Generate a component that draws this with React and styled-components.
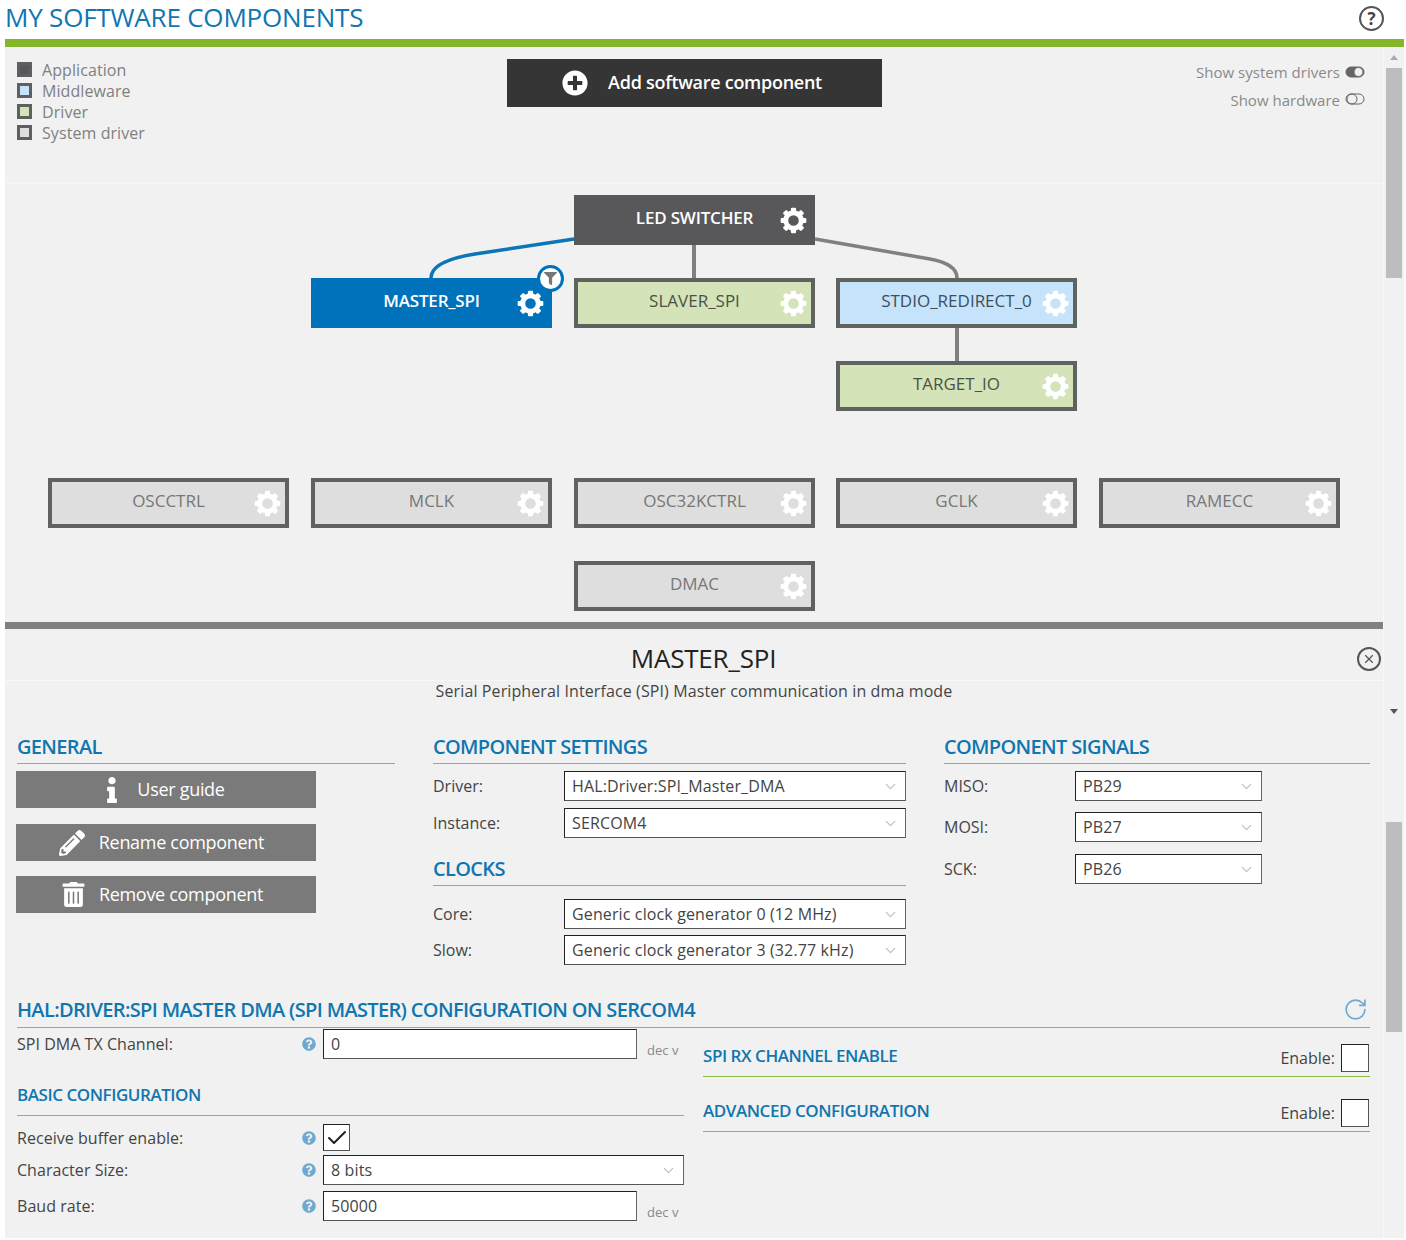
import React from 'react';
import styled, { createGlobalStyle } from 'styled-components';
import { FaFilter, FaInfo, FaPencilAlt, FaPlusCircle, FaQuestionCircle, FaTrashAlt } from 'react-icons/fa';
import { ChevronDown, RotateCw, X, Check } from 'lucide-react';

const blue = '#0f76b0';
const green = '#8dbd45';

const GlobalStyle = createGlobalStyle`
  html, body {
    margin: 0;
    padding: 0;
    background: #fff;
  }
  body {
    font-family: "Open Sans", "Liberation Sans", sans-serif;
    color: #333;
    overflow: hidden;
  }
`;

const Page = styled.div`
  width: 1406px;
  height: 1240px;
  padding-left: 5px;
  box-sizing: border-box;
  overflow: hidden;
`;

const TopBar = styled.header`
  width: 1399px;
  height: 39px;
  display: flex;
  justify-content: space-between;
  align-items: center;
  border-bottom: 8px solid #84b62c;
  box-sizing: content-box;
`;

const PageTitle = styled.h1`
  margin: 0 0 5px 0;
  font-size: 26px;
  font-weight: 400;
  letter-spacing: -0.2px;
  color: ${blue};
`;

const HelpCircle = styled.div`
  width: 25px;
  height: 25px;
  margin: 0 20px 3px 0;
  border: 2px solid #555;
  border-radius: 50%;
  box-sizing: border-box;
  display: flex;
  align-items: center;
  justify-content: center;
  font-size: 17px;
  font-weight: 700;
  color: #444;
`;

const Main = styled.div`
  display: flex;
  width: 1399px;
  height: 1191px;
  background: #f1f1f1;
`;

const Content = styled.div`
  width: 1378px;
  flex: none;
`;

const Rail = styled.aside`
  width: 21px;
  border-left: 1px solid #f8f8f8;
  box-sizing: border-box;
  display: flex;
  flex-direction: column;
  align-items: center;
  padding: 8px 1px 0 0;
`;

const Arrow = styled.i`
  width: 0;
  height: 0;
  border-left: 4px solid transparent;
  border-right: 4px solid transparent;
  ${({ $down }) => ($down ? 'border-top: 5px solid #555;' : 'border-bottom: 5px solid #aaa;')}
  margin-top: ${({ $gap }) => $gap}px;
`;

const Thumb = styled.div`
  width: 16px;
  height: 210px;
  background: #bdbdbd;
  margin-top: ${({ $gap }) => $gap}px;
`;

const Toolbar = styled.div`
  height: 137px;
  margin-bottom: -1px;
  border-bottom: 1px solid #f6f6f6;
  box-sizing: border-box;
  display: grid;
  grid-template-columns: 502px 375px 1fr;
  padding-top: 12px;
`;

const Legend = styled.ul`
  list-style: none;
  margin: 0;
  padding: 0 0 0 12px;
`;

const LegendItem = styled.li`
  display: flex;
  align-items: center;
  gap: 10px;
  height: 21px;
  font-size: 16px;
  letter-spacing: 0.08px;
  color: #808080;
`;

const Swatch = styled.span`
  width: 15px;
  height: 15px;
  box-sizing: border-box;
  border: 3px solid #5d5f60;
  background: ${({ $fill }) => $fill};
`;

const AddButton = styled.button`
  height: 48px;
  border: 0;
  padding: 0 5px 3px 0;
  background: #353535;
  color: #fff;
  font-family: inherit;
  font-size: 18px;
  font-weight: 600;
  letter-spacing: -0.28px;
  display: flex;
  align-items: center;
  justify-content: center;
  gap: 20px;

  svg {
    margin-top: 3px;
  }
`;

const Toggles = styled.div`
  display: flex;
  flex-direction: column;
  align-items: flex-end;
  gap: 6px;
  padding: 2px 18px 0 0;
`;

const ToggleRow = styled.div`
  display: flex;
  align-items: center;
  gap: 5px;
  height: 22px;
  font-size: 15px;
  letter-spacing: 0.02px;
  color: #8a8a8a;

  svg {
    margin-top: ${({ $raise }) => ($raise ? -3 : 0)}px;
  }
`;

const Canvas = styled.div`
  position: relative;
  height: 439px;
`;

const Links = styled.svg`
  position: absolute;
  left: 0;
  top: 0;
  width: 100%;
  height: 100%;
`;

const nodeThemes = {
  app: { bg: '#58585a', border: '#58585a', text: '#fff', weight: 600, spacing: -0.2 },
  selected: { bg: '#0072bc', border: '#0072bc', text: '#fff', weight: 600, spacing: -0.2 },
  driver: { bg: '#d5e3b8', border: '#5f625e', text: '#4c5147', weight: 400, spacing: 0 },
  middleware: { bg: '#c5e4fb', border: '#5f625e', text: '#3c4e5c', weight: 400, spacing: 0 },
  system: { bg: '#dedede', border: '#5f625e', text: '#777', weight: 400, spacing: 0 },
};

const Node = styled.div`
  position: absolute;
  left: ${({ $x }) => $x}px;
  top: ${({ $y }) => $y}px;
  width: 241px;
  height: 50px;
  box-sizing: border-box;
  border: 4px solid ${({ $kind }) => nodeThemes[$kind].border};
  background: ${({ $kind }) => nodeThemes[$kind].bg};
  color: ${({ $kind }) => nodeThemes[$kind].text};
  font-size: 17px;
  font-weight: ${({ $kind }) => nodeThemes[$kind].weight};
  letter-spacing: ${({ $kind }) => nodeThemes[$kind].spacing}px;
  display: flex;
  align-items: center;
  justify-content: center;
  padding-bottom: 5px;
`;

const GearIcon = styled.svg`
  position: absolute;
  right: 4px;
  top: 8px;
  width: 27px;
  height: 27px;
  color: #fff;
`;

const FilterBadge = styled.span`
  position: absolute;
  right: -16px;
  top: -17px;
  width: 27px;
  height: 27px;
  box-sizing: border-box;
  border: 3px solid #0072bc;
  border-radius: 50%;
  background: #fff;
  display: flex;
  align-items: center;
  justify-content: center;
  color: #777;
`;

const Divider = styled.div`
  height: 7px;
  background: #808080;
`;

const DetailHead = styled.div`
  position: relative;
  height: 87px;
  text-align: center;
`;

const DetailTitle = styled.div`
  padding: 12px 0 0 19px;
  height: 39px;
  font-size: 26px;
  line-height: 34px;
  letter-spacing: -0.2px;
  color: #222;
  border-bottom: 1px solid #f8f8f8;
`;

const DetailSub = styled.div`
  font-size: 16px;
  line-height: 20px;
  letter-spacing: 0.11px;
  color: #444;
`;

const CloseBtn = styled.span`
  position: absolute;
  right: 2px;
  top: 18px;
  width: 24px;
  height: 24px;
  box-sizing: border-box;
  border: 2px solid #555;
  border-radius: 50%;
  display: flex;
  align-items: center;
  justify-content: center;
  color: #555;
`;

const Body = styled.div`
  padding: 14px 0 0 12px;
  width: 1353px;
`;

const Columns = styled.div`
  display: grid;
  grid-template-columns: 378px 473px 426px;
  column-gap: 38px;
`;

const Heading = styled.h2`
  margin: ${({ $top }) => $top || 0}px 0 ${({ $bottom }) => $bottom || 0}px;
  height: ${({ $tall }) => ($tall ? 35 : 34)}px;
  box-sizing: border-box;
  border-bottom: 1px solid ${green};
  font-size: 20px;
  font-weight: 600;
  line-height: 34px;
  letter-spacing: -0.66px;
  color: ${blue};
  white-space: nowrap;
  display: flex;
  justify-content: space-between;
`;

const SubHeading = styled(Heading)`
  height: 37px;
  font-size: 17px;
  line-height: 31px;
  letter-spacing: -0.45px;
`;

const RefreshIcon = styled(RotateCw)`
  margin: 4px 2px 0 0;
  color: #6fa9cf;
`;

const GeneralButton = styled.button`
  display: flex;
  align-items: center;
  justify-content: center;
  gap: ${({ $gap }) => $gap}px;
  width: 300px;
  height: 37px;
  margin: 0 0 ${({ $after }) => $after}px -1px;
  padding: 0 ${({ $shift }) => $shift}px 2px 0;
  border: 0;
  background: #7a7a7a;
  color: #fff;
  font-family: inherit;
  font-size: 18px;
  letter-spacing: -0.3px;

  svg {
    flex: none;
    margin-top: 2px;
  }
`;

const FieldRow = styled.div`
  display: grid;
  grid-template-columns: 131px ${({ $width }) => $width || '1fr'};
  align-items: center;
  margin-bottom: ${({ $after }) => $after || 0}px;
  font-size: 16px;
  color: #444;
`;

const Box = styled.div`
  box-sizing: border-box;
  height: 30px;
  padding: 0 8px 0 7px;
  background: #fff;
  border: 1px solid #222;
  border-right-color: #666;
  border-bottom-color: #555;
  display: flex;
  align-items: center;
  justify-content: space-between;
  font-size: 16px;
  letter-spacing: 0.13px;
  color: #444;

  svg {
    flex: none;
    color: #bbb;
    margin-right: -2px;
  }
`;

const ConfigColumns = styled.div`
  display: grid;
  grid-template-columns: 667px 667px;
  column-gap: 19px;
`;

const CheckBox = styled.span`
  display: flex;
  align-items: center;
  justify-content: center;
  box-sizing: border-box;
  width: ${({ $size }) => $size}px;
  height: ${({ $size }) => $size}px;
  background: #fff;
  border: 1px solid #222;
  border-right-color: #555;
  border-bottom-color: #555;
  color: #222;
`;

const ConfigRow = styled.div`
  display: grid;
  grid-template-columns: 285px 14px ${({ $wide }) => ($wide ? '368px' : '321px 1fr')};
  align-items: center;
  margin-top: ${({ $top }) => $top || 0}px;
  font-size: 16px;
  letter-spacing: 0.04px;
  color: #444;

  ${Box}, ${CheckBox} {
    margin-left: 7px;
  }
`;

const HelpIcon = styled(FaQuestionCircle)`
  width: 14px;
  height: 14px;
  color: #6fa9cf;
`;

const Unit = styled.span`
  margin: 13px 0 0 10px;
  font-size: 13px;
  color: #888;
`;

const EnableRow = styled.div`
  height: 49px;
  margin-bottom: 6px;
  box-sizing: border-box;
  border-bottom: 1px solid ${green};
  display: flex;
  justify-content: space-between;
  align-items: flex-end;
  padding: 0 1px 4px 0;
`;

const EnableTitle = styled.span`
  font-size: 17px;
  font-weight: 600;
  letter-spacing: -0.45px;
  color: ${blue};
  margin-bottom: 5px;
`;

const EnableControl = styled.label`
  display: flex;
  align-items: center;
  gap: 6px;
  font-size: 16px;
  color: #444;
`;

const ToggleOn = () => (
  <svg width="20" height="12" viewBox="0 0 20 12">
    <rect x="1" y="1" width="18" height="10" rx="5" fill="#666" stroke="#666" />
    <circle cx="13.5" cy="6" r="4.5" fill="#f1f1f1" stroke="#666" />
  </svg>
);

const ToggleOff = () => (
  <svg width="20" height="12" viewBox="0 0 20 12" fill="none" stroke="#666">
    <rect x="1" y="1" width="18" height="10" rx="5" />
    <circle cx="7" cy="6" r="5" />
  </svg>
);

// eight teeth around a ring, the hole stays see-through
const Gear = () => (
  <GearIcon viewBox="0 0 24 24" fill="currentColor">
    <circle cx="12" cy="12" r="6.9" fill="none" stroke="currentColor" strokeWidth="4.4" />
    {[0, 45, 90, 135, 180, 225, 270, 315].map((angle) => (
      <rect key={angle} x="9.7" y="0.6" width="4.6" height="5" rx="1" transform={`rotate(${angle} 12 12)`} />
    ))}
  </GearIcon>
);

const legend = [
  ['Application', '#58585a'],
  ['Middleware', '#c5e4fb'],
  ['Driver', '#d5e3b8'],
  ['System driver', '#dedede'],
];

const nodes = [
  { name: 'LED SWITCHER', kind: 'app', x: 569, y: 12 },
  { name: 'MASTER_SPI', kind: 'selected', x: 306, y: 95, filter: true },
  { name: 'SLAVER_SPI', kind: 'driver', x: 569, y: 95 },
  { name: 'STDIO_REDIRECT_0', kind: 'middleware', x: 831, y: 95 },
  { name: 'TARGET_IO', kind: 'driver', x: 831, y: 178 },
  { name: 'OSCCTRL', kind: 'system', x: 43, y: 295 },
  { name: 'MCLK', kind: 'system', x: 306, y: 295 },
  { name: 'OSC32KCTRL', kind: 'system', x: 569, y: 295 },
  { name: 'GCLK', kind: 'system', x: 831, y: 295 },
  { name: 'RAMECC', kind: 'system', x: 1094, y: 295 },
  { name: 'DMAC', kind: 'system', x: 569, y: 378 },
];

const Select = ({ value }) => (
  <Box>
    {value}
    <ChevronDown size={17} strokeWidth={1.5} />
  </Box>
);

export default function App() {
  return (
    <>
      <GlobalStyle />
      <Page>
        <TopBar>
          <PageTitle>MY SOFTWARE COMPONENTS</PageTitle>
          <HelpCircle>?</HelpCircle>
        </TopBar>
        <Main>
          <Content>
            <Toolbar>
              <Legend>
                {legend.map(([label, fill]) => (
                  <LegendItem key={label}>
                    <Swatch $fill={fill} />
                    {label}
                  </LegendItem>
                ))}
              </Legend>
              <AddButton>
                <FaPlusCircle size={26} />
                Add software component
              </AddButton>
              <Toggles>
                <ToggleRow>Show system drivers <ToggleOn /></ToggleRow>
                <ToggleRow $raise>Show hardware <ToggleOff /></ToggleRow>
              </Toggles>
            </Toolbar>
            <Canvas>
              <Links viewBox="0 0 1378 439" fill="none">
                <path d="M569 56 L470 71 Q426 78 426 95" stroke="#0a75b8" strokeWidth="3.5" />
                <path d="M689 62 V95" stroke="#808080" strokeWidth="4" />
                <path d="M810 56 L925 76 Q952 81 952 95" stroke="#808080" strokeWidth="3.5" />
                <path d="M952 145 V178" stroke="#808080" strokeWidth="4" />
              </Links>
              {nodes.map((node) => (
                <Node key={node.name} $kind={node.kind} $x={node.x} $y={node.y}>
                  {node.name}
                  <Gear />
                  {node.filter && (
                    <FilterBadge>
                      <FaFilter size={13} />
                    </FilterBadge>
                  )}
                </Node>
              ))}
            </Canvas>
            <Divider />
            <DetailHead>
              <DetailTitle>MASTER_SPI</DetailTitle>
              <DetailSub>Serial Peripheral Interface (SPI) Master communication in dma mode</DetailSub>
              <CloseBtn>
                <X size={14} strokeWidth={2} />
              </CloseBtn>
            </DetailHead>
            <Body>
              <Columns>
                <div>
                  <Heading $bottom={7}>GENERAL</Heading>
                  <GeneralButton $gap={12} $after={16} $shift={8}>
                    <FaInfo size={26} />
                    User guide
                  </GeneralButton>
                  <GeneralButton $gap={14} $after={15} $shift={9}>
                    <FaPencilAlt size={26} />
                    Rename component
                  </GeneralButton>
                  <GeneralButton $gap={13} $after={0} $shift={8}>
                    <FaTrashAlt size={25} />
                    Remove component
                  </GeneralButton>
                </div>
                <div>
                  <Heading $bottom={7}>COMPONENT SETTINGS</Heading>
                  <FieldRow $after={7}>
                    <span>Driver:</span>
                    <Select value="HAL:Driver:SPI_Master_DMA" />
                  </FieldRow>
                  <FieldRow>
                    <span>Instance:</span>
                    <Select value="SERCOM4" />
                  </FieldRow>
                  <Heading $top={14} $bottom={13}>CLOCKS</Heading>
                  <FieldRow $after={6}>
                    <span>Core:</span>
                    <Select value="Generic clock generator 0 (12 MHz)" />
                  </FieldRow>
                  <FieldRow>
                    <span>Slow:</span>
                    <Select value="Generic clock generator 3 (32.77 kHz)" />
                  </FieldRow>
                </div>
                <div>
                  <Heading $bottom={7}>COMPONENT SIGNALS</Heading>
                  <FieldRow $width="187px" $after={11}>
                    <span>MISO:</span>
                    <Select value="PB29" />
                  </FieldRow>
                  <FieldRow $width="187px" $after={12}>
                    <span>MOSI:</span>
                    <Select value="PB27" />
                  </FieldRow>
                  <FieldRow $width="187px">
                    <span>SCK:</span>
                    <Select value="PB26" />
                  </FieldRow>
                </div>
              </Columns>
              <Heading $top={28} $tall>
                HAL:DRIVER:SPI MASTER DMA (SPI MASTER) CONFIGURATION ON SERCOM4
                <RefreshIcon size={25} strokeWidth={1.6} />
              </Heading>
              <ConfigColumns>
                <div>
                  <ConfigRow>
                    <span>SPI DMA TX Channel:</span>
                    <HelpIcon />
                    <Box>0</Box>
                    <Unit>dec v</Unit>
                  </ConfigRow>
                  <SubHeading $top={20} $bottom={8}>BASIC CONFIGURATION</SubHeading>
                  <ConfigRow>
                    <span>Receive buffer enable:</span>
                    <HelpIcon />
                    <CheckBox $size={27}>
                      <Check size={24} strokeWidth={2} />
                    </CheckBox>
                  </ConfigRow>
                  <ConfigRow $wide $top={4}>
                    <span>Character Size:</span>
                    <HelpIcon />
                    <Select value="8 bits" />
                  </ConfigRow>
                  <ConfigRow $top={5}>
                    <span>Baud rate:</span>
                    <HelpIcon />
                    <Box>50000</Box>
                    <Unit>dec v</Unit>
                  </ConfigRow>
                </div>
                <div>
                  <EnableRow>
                    <EnableTitle>SPI RX CHANNEL ENABLE</EnableTitle>
                    <EnableControl>
                      Enable:
                      <CheckBox $size={28} />
                    </EnableControl>
                  </EnableRow>
                  <EnableRow>
                    <EnableTitle>ADVANCED CONFIGURATION</EnableTitle>
                    <EnableControl>
                      Enable:
                      <CheckBox $size={28} />
                    </EnableControl>
                  </EnableRow>
                </div>
              </ConfigColumns>
            </Body>
          </Content>
          <Rail>
            <Arrow $gap={0} />
            <Thumb $gap={8} />
            <Arrow $down $gap={431} />
            <Thumb $gap={108} />
          </Rail>
        </Main>
      </Page>
    </>
  );
}
